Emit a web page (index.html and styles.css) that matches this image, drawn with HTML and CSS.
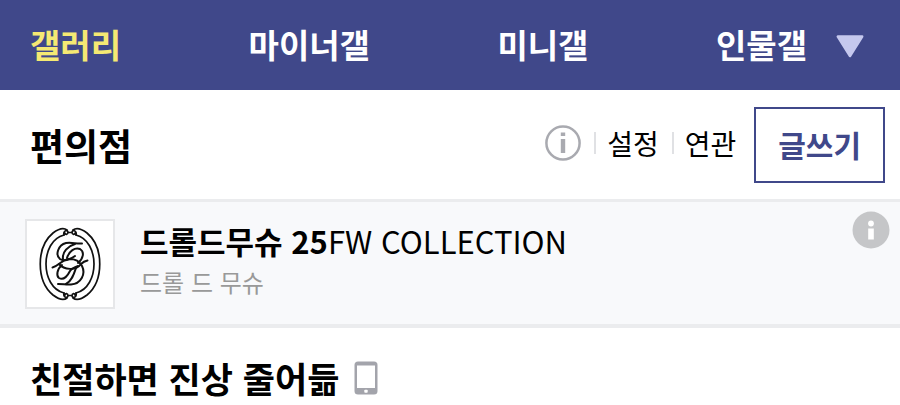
FILE: index.html
```
<!DOCTYPE html>
<html lang="ko">
<head>
    <meta charset="UTF-8">
    <meta name="viewport" content="width=device-width, initial-scale=1.0">
    <title>편의점 갤러리</title>
    <link rel="stylesheet" href="styles.css">
</head>
<body>
    <nav class="main-nav">
        <a href="#" class="active">갤러리</a>
        <a href="#">마이너갤</a>
        <a href="#">미니갤</a>
        <div class="nav-last">
            <a href="#">인물갤</a>
            <button type="button" class="more-button" aria-label="더보기">
                <svg width="28" height="24" viewBox="0 0 28 24">
                    <path d="M1.8 2.5H26.2L14 22Z" fill="#c5c8ee" stroke="#c5c8ee" stroke-width="2.5" stroke-linejoin="round"/>
                </svg>
            </button>
        </div>
    </nav>

    <header class="gallery-header">
        <h1>편의점</h1>
        <div class="gallery-menu">
            <button type="button" class="info-button" aria-label="갤러리 정보">
                <svg width="36" height="36" viewBox="0 0 36 36">
                    <circle cx="18" cy="18" r="16.6" fill="none" stroke="#a9aab0" stroke-width="2.5"/>
                    <path d="M15.8 7.5h4.4v3.5h-4.4zM15.8 14h4.4v14h-4.4z" fill="#a9aab0"/>
                </svg>
            </button>
            <a href="#">설정</a>
            <a href="#">연관</a>
        </div>
        <button type="button" class="write-button">글쓰기</button>
    </header>

    <section class="ad">
        <a href="#" class="ad-thumb" aria-label="드롤드무슈">
            <svg width="84" height="84" viewBox="0 0 84 84" fill="none" stroke="#111" stroke-width="1.7" stroke-linecap="round">
                <!-- oval frame -->
                <path d="M39 8C35 5 29 8 25 11C8 25 8 59 25 73C29 76 35 79 39 76"/>
                <path d="M45 8C49 5 55 8 59 11C76 25 76 59 59 73C55 76 49 79 45 76"/>
                <path d="M36 13C12 19 12 65 36 71M48 13C72 19 72 65 48 71"/>
                <path d="M36 13C35 9 39 7 40 10C40 13 37 13 37 11M48 13C49 9 45 7 44 10C44 13 47 13 47 11M40 10.5H44"/>
                <path d="M36 71C35 75 39 77 40 74C40 71 37 71 37 73M48 71C49 75 45 77 44 74C44 71 47 71 47 73M40 73.5H44"/>
                <!-- crossed monogram -->
                <g stroke-width="2">
                    <path d="M54 21.5C48 22 44 20 38 21C30 23 27 33 32 37C36 40 43 37 47 34"/>
                    <path d="M47 22C40 24 34 30 35 37"/>
                    <path d="M39 36C41 29 47 25 52 27C57 30 55 37 50 41"/>
                    <path d="M24.5 45.5C31 44 33 38 41 37C48 37 51 39 54 44C58 52 53 62 43 62.5C38 63 36 62 30 62"/>
                    <path d="M31 42C36 48 48 49 53 42C55 40 57 39 59.5 38.5"/>
                    <path d="M34 43C29 47 28 54 31 56C36 59 40 53 42 49C44 46 47 45 50 44"/>
                    <path d="M48 46C46 52 44 59 38 62"/>
                </g>
            </svg>
        </a>
        <a href="#" class="ad-text">
            <span class="ad-title"><strong>드롤드무슈 25</strong>FW COLLECTION</span>
            <span class="ad-desc">드롤 드 무슈</span>
        </a>
        <button type="button" class="ad-info" aria-label="광고 정보">
            <svg width="38" height="38" viewBox="0 0 38 38">
                <circle cx="19" cy="19" r="18.5" fill="#c5c6c8"/>
                <circle cx="19" cy="12.5" r="2.9" fill="#fff"/>
                <path d="M16.2 17.5h5.6v11h-5.6z" fill="#fff"/>
            </svg>
        </button>
    </section>

    <main class="post">
        <h2>친절하면 진상 줄어듦</h2>
        <svg width="24" height="34" viewBox="0 0 24 34" role="img" aria-label="모바일 작성">
            <rect x="0.5" y="0.5" width="23" height="33" rx="3.5" fill="#a3a4ab"/>
            <path d="M3 4.5h18v22.5H3z" fill="#fff"/>
            <rect x="10.3" y="28.7" width="3.4" height="3" rx="0.8" fill="#fff"/>
        </svg>
    </main>
</body>
</html>
```
FILE: styles.css
```
* {
    box-sizing: border-box;
}

body {
    margin: 0;
    font-family: "Noto Sans CJK KR", sans-serif;
    background: #fff;
    color: #000;
}

a {
    color: inherit;
    text-decoration: none;
}

button {
    padding: 0;
    border: none;
    background: none;
    font-family: inherit;
    cursor: pointer;
}

svg {
    display: block;
    flex-shrink: 0;
}

.main-nav {
    display: flex;
    justify-content: space-between;
    align-items: center;
    padding: 19px 36px 21px 30px;
    background: #40488a;
    color: #fff;
    font-size: 33px;
    font-weight: 700;
    line-height: 50px;
}

.main-nav .active {
    color: #f5e973;
}

.nav-last {
    display: flex;
    align-items: center;
    gap: 29px;
}

.more-button {
    padding-top: 4px;
}

.gallery-header {
    display: flex;
    align-items: center;
    padding: 17px 15px 16px 30px;
}

.gallery-header h1 {
    margin: 0;
    font-size: 37px;
    font-weight: 700;
    line-height: 50px;
}

.gallery-menu {
    display: flex;
    align-items: center;
    margin-left: auto;
    margin-right: 18px;
    padding-bottom: 4px;
    font-size: 28px;
    line-height: 40px;
}

.gallery-menu a {
    display: flex;
    align-items: center;
}

.gallery-menu a::before {
    content: "";
    width: 2px;
    height: 22px;
    margin: 0 11px 0 13px;
    background: #e0e1e4;
}

.write-button {
    padding: 12px 22px 14px;
    border: 2px solid #40488a;
    color: #40488a;
    font-size: 30px;
    font-weight: 700;
    line-height: 46px;
}

.ad {
    display: flex;
    align-items: flex-start;
    padding: 17px 10px 15px 25px;
    border-top: 3px solid #ebecee;
    border-bottom: 4px solid #ebecee;
    background: #f8f9fb;
}

.ad-thumb {
    padding: 1px;
    border: 2px solid #e6e7e9;
    background: #fff;
}

.ad-text {
    display: flex;
    flex-direction: column;
    flex: 1;
    margin-left: 25px;
}

.ad-title {
    font-size: 31px;
    line-height: 44px;
}

.ad-desc {
    color: #999;
    font-size: 24px;
    line-height: 38px;
}

.ad-info {
    margin-top: -8px;
}

.post {
    display: flex;
    align-items: center;
    gap: 15px;
    padding: 24px 30px 0;
}

.post h2 {
    margin: 0;
    font-size: 35px;
    font-weight: 700;
    line-height: 52px;
}
```
